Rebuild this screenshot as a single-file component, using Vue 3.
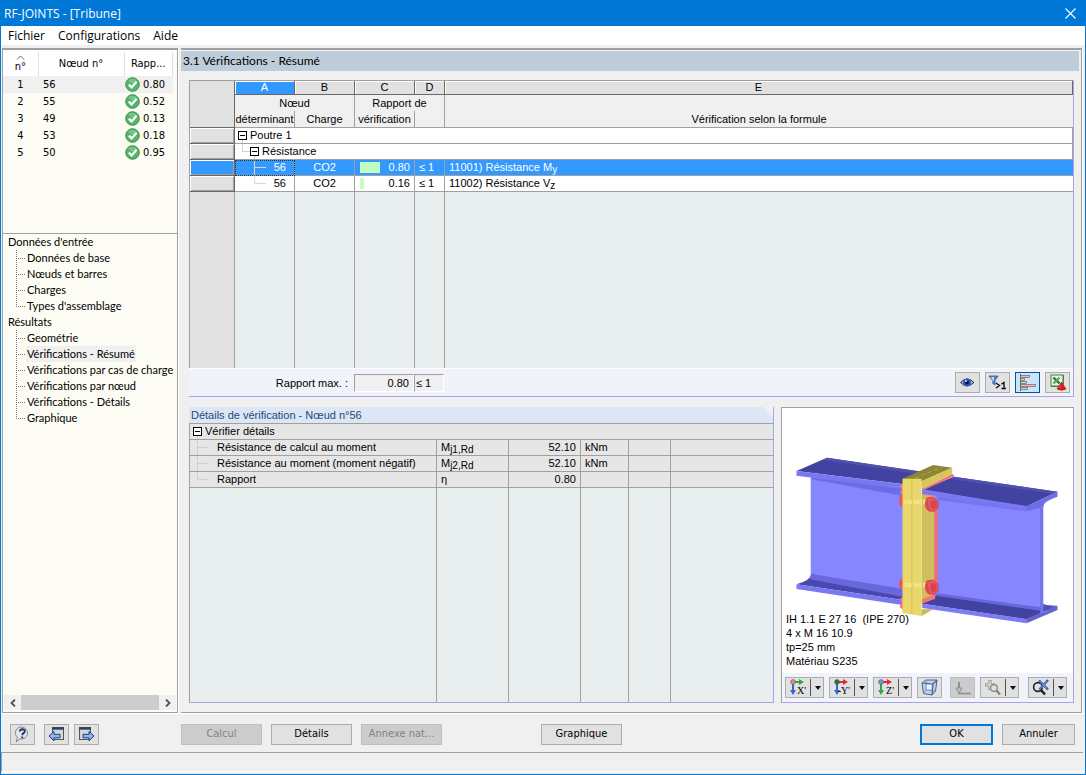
<template>
  <div class="window">
    <header class="titlebar">
      <span>RF-JOINTS - [Tribune]</span>
      <button class="close" aria-label="Fermer">
        <svg width="11" height="11" viewBox="0 0 11 11"><path d="M.5 .5L10.5 10.5M10.5 .5L.5 10.5" stroke="#fff" stroke-width="1.1" /></svg>
      </button>
    </header>
    <nav class="menubar">
      <a v-for="entry in menu" :key="entry" href="#">{{ entry }}</a>
    </nav>

    <div class="body">
      <aside class="sidebar">
        <div class="list-pane">
          <table class="node-list">
            <colgroup><col class="l-num" /><col class="l-node" /><col class="l-ratio" /></colgroup>
            <thead>
              <tr>
                <th class="sorted">
                  <svg width="9" height="5" viewBox="0 0 9 5"><path d="M1 4.5L4.5 1L8 4.5" fill="none" stroke="#666" /></svg>
                  <span>n°</span>
                </th>
                <th>Nœud n°</th>
                <th>Rapp...</th>
              </tr>
            </thead>
            <tbody>
              <tr v-for="(node, i) in nodes" :key="node.id" :class="{ active: i === 0 }">
                <td class="center">{{ i + 1 }}</td>
                <td>{{ node.id }}</td>
                <td class="ratio">
                  <svg width="15" height="15" viewBox="0 0 15 15">
                    <circle cx="7.5" cy="7.5" r="6.8" fill="#55b56a" stroke="#3c8f52" />
                    <path d="M3.2 3.6Q7.5 0 11.8 3.6L7.5 7Z" fill="#8bd39a" opacity=".6" />
                    <path d="M3.8 7.6L6.6 10.4L11.6 4.8" fill="none" stroke="#fff" stroke-width="2.2" />
                  </svg>
                  {{ node.ratio }}
                </td>
              </tr>
            </tbody>
          </table>
        </div>

        <div class="tree">
          <template v-for="group in tree" :key="group.label">
            <a class="group" href="#">{{ group.label }}</a>
            <ul>
              <li v-for="(item, i) in group.items" :key="item">
                <svg width="10" height="16" viewBox="0 0 10 16">
                  <path :d="i === group.items.length - 1 ? 'M.5 0V9' : 'M.5 0V16'" stroke="#777" stroke-dasharray="1 1" />
                  <path d="M2 8.5H10" stroke="#777" stroke-dasharray="1 1" />
                </svg>
                <a href="#" :class="{ current: item === currentPage }">{{ item }}</a>
              </li>
            </ul>
          </template>
        </div>

        <div class="scrollbar">
          <button aria-label="Gauche"><svg width="6" height="8" viewBox="0 0 6 8"><path d="M5 .5L1.5 4L5 7.5" fill="none" stroke="#505050" stroke-width="1.8" /></svg></button>
          <div class="thumb"></div>
          <button aria-label="Droite"><svg width="6" height="8" viewBox="0 0 6 8"><path d="M1 .5L4.5 4L1 7.5" fill="none" stroke="#505050" stroke-width="1.8" /></svg></button>
        </div>
      </aside>

      <main class="content">
        <h1>3.1 Vérifications - Résumé</h1>
        <div class="panels">
          <section class="summary">
            <div class="table-wrap">
              <table class="grid">
                <colgroup>
                  <col class="c-head" /><col class="c-60" /><col class="c-60" /><col class="c-60" /><col class="c-30" /><col />
                </colgroup>
                <thead>
                  <tr class="letters">
                    <th rowspan="3" class="corner"></th>
                    <th v-for="letter in 'ABCDE'" :key="letter" :class="{ chosen: letter === 'A' }">{{ letter }}</th>
                  </tr>
                  <tr>
                    <th colspan="2" class="no-bottom">Nœud</th>
                    <th colspan="2" class="no-bottom">Rapport de</th>
                    <th class="no-bottom no-right"></th>
                  </tr>
                  <tr class="labels">
                    <th>déterminant</th>
                    <th>Charge</th>
                    <th>vérification</th>
                    <th></th>
                    <th class="no-right">Vérification selon la formule</th>
                  </tr>
                </thead>
                <tbody>
                  <tr>
                    <th class="rowhead"></th>
                    <td colspan="5" class="branch-cell">
                      <span class="branch">
                        <svg width="15" height="15" viewBox="0 0 15 15">
                          <path d="M7.5 12V15" stroke="#d0d0d0" />
                          <rect x="3.5" y="3.5" width="8" height="8" fill="#fff" stroke="#000" /><path d="M5 7.5H10" stroke="#000" />
                        </svg>Poutre 1
                      </span>
                    </td>
                  </tr>
                  <tr>
                    <th class="rowhead"></th>
                    <td colspan="5" class="branch-cell">
                      <span class="branch">
                        <svg width="27" height="15" viewBox="0 0 27 15">
                          <path d="M7.5 0V7.5H15M19.5 12V15" fill="none" stroke="#d0d0d0" />
                          <rect x="15.5" y="3.5" width="8" height="8" fill="#fff" stroke="#000" /><path d="M17 7.5H22" stroke="#000" />
                        </svg>Résistance
                      </span>
                    </td>
                  </tr>
                  <tr v-for="(check, i) in checks" :key="check.code" :class="{ selected: i === 0 }">
                    <th class="rowhead"></th>
                    <td class="node-cell">
                      <span class="branch spread">
                        <svg width="32" height="15" viewBox="0 0 32 15">
                          <path :d="i === checks.length - 1 ? 'M19.5 0V7.5H31' : 'M19.5 0V15M19.5 7.5H31'" fill="none" stroke="#d8d8d8" />
                        </svg>{{ check.node }}
                      </span>
                    </td>
                    <td class="center">{{ check.load }}</td>
                    <td class="ratio-cell">
                      <span class="meter">
                        <i :style="{ width: check.ratio * 25 + 'px' }"></i>{{ check.ratio.toFixed(2) }}
                      </span>
                    </td>
                    <td>≤ 1</td>
                    <td class="no-right">{{ check.code }}) Résistance {{ check.symbol }}<sub>{{ check.axis }}</sub></td>
                  </tr>
                  <tr class="filler">
                    <th></th><td></td><td></td><td></td><td></td><td class="no-right"></td>
                  </tr>
                </tbody>
              </table>
            </div>
            <div class="summary-foot">
              <label for="ratio-max">Rapport max. :</label>
              <input id="ratio-max" class="value" value="0.80" readonly />
              <input class="limit" value="≤ 1" aria-label="Limite" readonly />
              <span class="spacer"></span>
              <button class="icon-button" aria-label="Vue">
                <svg width="17" height="15" viewBox="0 0 17 15">
                  <path d="M1.5 7.5Q8 .5 15 7.5Q8 14 1.5 7.5Z" fill="#b9c3dd" stroke="#222a3d" />
                  <circle cx="8" cy="7.5" r="4" fill="#3658b8" /><circle cx="8" cy="7.5" r="2" fill="#0a1640" /><circle cx="7" cy="6" r="1.1" fill="#c7dcff" />
                </svg>
              </button>
              <button class="icon-button" aria-label="Filtre">
                <svg width="19" height="17" viewBox="0 0 19 17">
                  <path d="M1 2H10L7 6.5V11L4.8 9.5V6.5Z" fill="#5c87c7" stroke="#31568f" stroke-width=".8" /><path d="M3 3H6L5.5 8Z" fill="#c6daf5" />
                  <path d="M8 9L11.5 11.5L8 14M16 15V8.5L13.5 10.2M13.5 14.5H18" fill="none" stroke="#111" stroke-width="1.4" />
                </svg>
              </button>
              <button class="icon-button pressed" aria-label="Barres">
                <svg width="18" height="17" viewBox="0 0 18 17">
                  <path d="M1.5 0V17" stroke="#555" />
                  <rect x="1.5" y="1.5" width="9" height="2" fill="#ffb4b4" stroke="#667" stroke-width=".7" />
                  <rect x="1.5" y="4.5" width="4" height="2" fill="#b4e8b4" stroke="#667" stroke-width=".7" />
                  <rect x="1.5" y="7.5" width="6" height="2" fill="#b4e8b4" stroke="#667" stroke-width=".7" />
                  <rect x="1.5" y="10.5" width="15" height="2" fill="#ffb4b4" stroke="#667" stroke-width=".7" />
                  <rect x="1.5" y="13.5" width="7" height="2" fill="#b4e8b4" stroke="#667" stroke-width=".7" />
                </svg>
              </button>
              <button class="icon-button" aria-label="Excel">
                <svg width="18" height="17" viewBox="0 0 18 17">
                  <rect x="2" y="1" width="12" height="11" fill="#e9f3e6" stroke="#3e8443" /><path d="M14.5 1V10M2 12.5H9" stroke="#3e8443" />
                  <path d="M4.5 3.5L10.5 9.5" stroke="#23772e" stroke-width="2.4" /><path d="M10.5 3.5L4.5 9.5" stroke="#4fa554" stroke-width="2" />
                  <path d="M12.5 8L17 15Q12.5 17.5 8 15Z" fill="#d42020" stroke="#9b1010" stroke-width=".6" /><path d="M12 9.5L9.5 14L12 15Z" fill="#f36" opacity=".6" />
                </svg>
              </button>
            </div>
          </section>

          <section class="details">
            <h2>Détails de vérification - Nœud n°56</h2>
            <div class="table-wrap">
              <table class="grid detail-grid">
                <colgroup>
                  <col /><col class="c-72" /><col class="c-72" /><col class="c-48" /><col class="c-42" /><col class="c-102" />
                </colgroup>
                <tbody>
                  <tr>
                    <td colspan="6" class="branch-cell no-right">
                      <span class="branch">
                        <svg width="15" height="15" viewBox="0 0 15 15">
                          <path d="M7.5 12V15" stroke="#d0d0d0" />
                          <rect x="3.5" y="3.5" width="8" height="8" fill="#fff" stroke="#000" /><path d="M5 7.5H10" stroke="#000" />
                        </svg>Vérifier détails
                      </span>
                    </td>
                  </tr>
                  <tr v-for="(row, i) in details" :key="row.label">
                    <td class="branch-cell">
                      <span class="branch">
                        <svg width="27" height="15" viewBox="0 0 27 15">
                          <path :d="i === details.length - 1 ? 'M7.5 0V7.5H19' : 'M7.5 0V15M7.5 7.5H19'" fill="none" stroke="#d0d0d0" />
                        </svg>{{ row.label }}
                      </span>
                    </td>
                    <td>{{ row.symbol }}<sub>{{ row.index }}</sub></td>
                    <td class="right">{{ row.value }}</td>
                    <td>{{ row.unit }}</td>
                    <td></td>
                    <td class="no-right"></td>
                  </tr>
                  <tr class="filler">
                    <td></td><td></td><td></td><td></td><td></td><td class="no-right"></td>
                  </tr>
                </tbody>
              </table>
            </div>
          </section>

          <section class="viewer">
            <div class="scene">
              <svg viewBox="6 24 870 795" height="265">
                <!-- left beam -->
                <path d="M92 232L370 262V600L92 536Z" fill="#8686ff" />
                <path d="M92 232L370 262V288L92 238Z" fill="#6c6ce6" />
                <path d="M48 213L139 173L430 216L366 252Z" fill="#4242a0" />
                <path d="M48 213L366 252V267L48 227Z" fill="#7878f0" />
                <path d="M139 173L430 216L415 222L130 180Z" fill="#5050b0" />
                <path d="M92 522Q92 540 48 553L366 600V578Z" fill="#4848ae" />
                <path d="M92 522L366 566V590L88 538Z" fill="#6868dc" />
                <path d="M48 553L366 600V615L48 567Z" fill="#7878f0" />
                <path d="M92 232V524" stroke="#7070e8" stroke-width="2" />
                <!-- welds on the left side -->
                <path d="M357 257L368 250V286L357 278L364 268ZM357 598L368 590V630L357 620L364 608Z" fill="#f57474" />
                <path d="M368 286H360Q350 304 360 319H368ZM368 536H360Q350 552 360 568H368Z" fill="#e05a64" />
                <!-- right beam -->
                <path d="M425 262L788 316V630L425 590Z" fill="#8686ff" />
                <path d="M472 290L740 326L788 314V322L740 334L472 300Z" fill="#7474ee" />
                <path d="M425 268L520 230L831 275L738 319Z" fill="#4242a0" />
                <path d="M520 230L831 275L816 281L510 237Z" fill="#5050b0" />
                <path d="M425 270L738 318V330L425 283Z" fill="#7878f0" />
                <path d="M738 318L831 275V290Q788 304 788 320L738 330Z" fill="#6e6ee4" />
                <path d="M472 580L782 622V638L425 608Z" fill="#6868dc" />
                <path d="M425 598L470 588L780 632L831 618L738 658L425 611Z" fill="#4242a0" />
                <path d="M425 611L738 657V670L425 624Z" fill="#7c7cf4" />
                <path d="M738 657L831 617V630L738 670Z" fill="#6262d0" />
                <path d="M779 318H788V618Q790 630 808 635L776 641Q784 632 779 618Z" fill="#7474ec" />
                <path d="M788 610Q788 617 831 617L788 634Z" fill="#5050b8" />
                <!-- end plates -->
                <path d="M366 236L458 195L515 203L423 244Z" fill="#8f8534" />
                <path d="M405 234L485 200" stroke="#afa44a" stroke-width="3" stroke-dasharray="12 8" />
                <path d="M423 244L515 203V222L423 266Z" fill="#d6c75c" />
                <path d="M425 266L515 222L523 228L430 270Z" fill="#f57474" />
                <path d="M423 286L462 290V590L423 610Z" fill="#cfc05c" />
                <path d="M366 236H423V648L366 639Z" fill="#e9d76b" />
                <path d="M394 240V643" stroke="#c3b44d" stroke-width="2" />
                <path d="M423 628L458 628L423 648Z" fill="#c8b74f" />
                <path d="M462 320H472V545L462 560Z" fill="#f56c72" />
                <path d="M425 598L464 582V596L425 611Z" fill="#f57474" />
                <path d="M423 282L466 288L456 294L430 292Z" fill="#f0a060" />
                <!-- bolts -->
                <g v-for="y in [306, 555]" :key="y">
                  <path :d="`M370 ${y}H434`" stroke="#f1e27e" stroke-width="14" stroke-dasharray="24 5" />
                  <ellipse cx="450" :cy="y + 7" rx="17" ry="22" fill="#e54c58" />
                  <path :d="`M438 ${y - 12}L458 ${y - 15}L473 ${y - 2}V${y + 17}L460 ${y + 29}L444 ${y + 24}Z`" fill="#e85560" stroke="#bd4048" stroke-width="2" />
                  <ellipse cx="459" :cy="y + 8" rx="9" ry="13" fill="#d64552" />
                </g>
              </svg>
              <p class="caption">IH 1.1 E 27 16 &nbsp;(IPE 270)<br />4 x M 16 10.9<br />tp=25 mm<br />Matériau S235</p>
            </div>
            <div class="view-tools">
              <button v-for="axis in axes" :key="axis.label" class="split" :aria-label="'Vue ' + axis.label">
                <svg width="18" height="17" viewBox="0 0 18 17">
                  <path d="M4 3H11" :stroke="axis.across" stroke-width="2" /><path d="M10 0L15 3L10 6Z" :fill="axis.across" />
                  <path d="M4 4V12" :stroke="axis.down" stroke-width="2" /><path d="M1 11H7L4 16Z" :fill="axis.down" />
                  <circle cx="4" cy="3" r="2.4" :fill="axis.origin" stroke="#444" stroke-width=".5" />
                  <text x="17" y="15" text-anchor="end" font-family="Liberation Serif, serif" font-size="10">{{ axis.label }}</text>
                </svg>
                <span class="divider"></span><span class="arrow"></span>
              </button>
              <button class="icon-button" aria-label="Isométrie">
                <svg width="17" height="17" viewBox="0 0 17 17" stroke="#4a5f8c">
                  <path d="M1 4L5 1H16L14.5 12L11 16L2.5 14.5Z" fill="#c3d3ee" /><path d="M5 1V11L14.5 12M2.5 14.5L5 11" fill="none" stroke="#8195bd" />
                  <path d="M1 4L12 5L11 16M12 5L16 1" fill="none" stroke-width="1.2" /><rect x="6" y="6" width="4" height="4" fill="#f1f5ff" stroke="none" />
                </svg>
              </button>
              <button class="icon-button disabled after-cube" aria-label="Charges" disabled>
                <svg width="17" height="17" viewBox="0 0 17 17">
                  <path d="M5 3V9" stroke="#8f8f8f" stroke-width="2" /><path d="M2 9H8L5 14Z" fill="#c4c4c4" stroke="#8f8f8f" /><path d="M4 14.5H17" stroke="#8f8f8f" stroke-width="1.6" />
                </svg>
              </button>
              <button class="split" aria-label="Zoom">
                <svg width="18" height="17" viewBox="0 0 18 17">
                  <path d="M6 1V11M1 6H11" stroke="#a2a49c" stroke-width="3.4" /><path d="M6 2V10M2 6H10" stroke="#ecece8" stroke-width="1" />
                  <circle cx="10" cy="9" r="3.4" fill="#dfe0da" stroke="#85877f" stroke-width="1.2" /><path d="M12.5 11.5L16 15.5" stroke="#85877f" stroke-width="2.2" />
                </svg>
                <span class="divider"></span><span class="arrow"></span>
              </button>
              <button class="split last" aria-label="Zoom étendu">
                <svg width="18" height="17" viewBox="0 0 18 17">
                  <circle cx="6" cy="8" r="4.4" fill="#d7e2f3" stroke="#222" stroke-width="1.6" /><path d="M9 11L13 15.5" stroke="#222" stroke-width="2.6" />
                  <path d="M7 1.5L16 10.5M16 1L7.5 10.5" stroke="#35589f" stroke-width="2.4" /><path d="M8 2.5L15 9.5M15 2L8.5 9.5" stroke="#93b6ef" stroke-width=".8" />
                </svg>
                <span class="divider"></span><span class="arrow"></span>
              </button>
            </div>
          </section>
        </div>
      </main>
    </div>

    <footer class="actions">
      <div class="left-actions">
        <button class="icon-button help" aria-label="Aide">
          <svg width="17" height="17" viewBox="0 0 17 17">
            <path d="M8 1A6.5 6 0 1 1 6 13L2 16L3.5 11.5A6.5 6 0 0 1 8 1Z" fill="#e2e5ea" stroke="#858990" />
            <path d="M5.8 5.5Q6 3.2 8.4 3.2Q11 3.3 10.8 5.4Q10.7 6.6 9.2 7.4Q8.3 8 8.3 9.2M8.2 10.6V12.3" fill="none" stroke="#25326f" stroke-width="1.9" />
          </svg>
        </button>
        <button class="icon-button" aria-label="Précédent">
          <svg width="17" height="17" viewBox="0 0 17 17">
            <rect x="4.5" y="1.5" width="11" height="12" fill="#d6d6d6" stroke="#555" /><path d="M4 2.5H16" stroke="#2e3f68" stroke-width="2.4" />
            <path d="M1 10L6 5.5V8.3H12V11.8H6V14.8Z" fill="#8db5f2" stroke="#1f3f82" />
          </svg>
        </button>
        <button class="icon-button" aria-label="Suivant">
          <svg width="17" height="17" viewBox="0 0 17 17">
            <rect x="1.5" y="1.5" width="11" height="12" fill="#d6d6d6" stroke="#555" /><path d="M1 2.5H13" stroke="#2e3f68" stroke-width="2.4" />
            <path d="M16 10L11 5.5V8.3H5V11.8H11V14.8Z" fill="#8db5f2" stroke="#1f3f82" />
          </svg>
        </button>
      </div>
      <button class="push" disabled>Calcul</button>
      <button class="push">Détails</button>
      <button class="push" disabled>Annexe nat...</button>
      <button class="push graphic">Graphique</button>
      <span class="spacer"></span>
      <button class="push small default">OK</button>
      <button class="push small">Annuler</button>
    </footer>
    <div class="statusbar"></div>
  </div>
</template>

<script setup>
import { ref } from 'vue';

const menu = ['Fichier', 'Configurations', 'Aide'];
const currentPage = ref('Vérifications - Résumé');

const nodes = [
  { id: 56, ratio: '0.80' },
  { id: 55, ratio: '0.52' },
  { id: 49, ratio: '0.13' },
  { id: 53, ratio: '0.18' },
  { id: 50, ratio: '0.95' },
];

const tree = [
  {
    label: "Données d'entrée",
    items: ['Données de base', 'Nœuds et barres', 'Charges', "Types d'assemblage"],
  },
  {
    label: 'Résultats',
    items: [
      'Geométrie',
      'Vérifications - Résumé',
      'Vérifications par cas de charge',
      'Vérifications par nœud',
      'Vérifications - Détails',
      'Graphique',
    ],
  },
];

const checks = [
  { node: 56, load: 'CO2', ratio: 0.8, code: 11001, symbol: 'M', axis: 'y' },
  { node: 56, load: 'CO2', ratio: 0.16, code: 11002, symbol: 'V', axis: 'z' },
];

const details = [
  { label: 'Résistance de calcul au moment', symbol: 'M', index: 'j1,Rd', value: '52.10', unit: 'kNm' },
  { label: 'Résistance au moment (moment négatif)', symbol: 'M', index: 'j2,Rd', value: '52.10', unit: 'kNm' },
  { label: 'Rapport', symbol: 'η', index: '', value: '0.80', unit: '' },
];

const axes = [
  { label: "X'", across: '#2fa84a', down: '#3565d6', origin: '#e88' },
  { label: "-Y'", across: '#e02b3c', down: '#3565d6', origin: '#1f7a33' },
  { label: "Z'", across: '#e02b3c', down: '#2fa84a', origin: '#88e' },
];
</script>

<style>
body {
  margin: 0;
  background: #f0f0f0;
}
</style>

<style scoped>
* {
  box-sizing: border-box;
}

.window {
  display: flex;
  flex-direction: column;
  min-height: 100vh;
  border: 1px solid #0078d7;
  background: #f0f0f0;
  color: #000;
  font: 11px/16px "DejaVu Sans Condensed", "DejaVu Sans", sans-serif;
}

button,
input {
  font: inherit;
  color: inherit;
}

a {
  color: inherit;
  text-decoration: none;
}

svg {
  display: block;
  flex: none;
}

.titlebar {
  display: flex;
  align-items: center;
  justify-content: space-between;
  height: 25px;
  padding: 0 9px 0 3px;
  background: #0078d7;
  color: #fff;
  font: 12px/24px "Open Sans", sans-serif;
}

.close {
  padding: 0;
  border: 0;
  background: none;
}

.menubar {
  display: flex;
  gap: 13px;
  height: 19px;
  padding-left: 7px;
  background: #fff;
  font: 12px/19px "Open Sans", sans-serif;
}

.body {
  display: flex;
  flex: 1;
  gap: 3px;
  margin: 3px 3px 0 1px;
}

.sidebar {
  display: flex;
  flex-direction: column;
  width: 176px;
  border: 1px solid #a0a0a0;
  border-width: 2px 1px 1px 1px;
  background: #fcfcf4;
  box-shadow: 1px 1px #fff;
}

.list-pane {
  height: 184px;
  border-top: 2px solid #fff;
  border-bottom: 1px solid #a0a0a0;
}

.node-list {
  width: 170px;
  table-layout: fixed;
  border-collapse: collapse;
}

.l-num { width: 35px; }
.l-node { width: 86px; }

.node-list th {
  height: 24px;
  padding: 0;
  border-right: 1px solid #e0e0e0;
  background: #fff;
  font-weight: normal;
}

.sorted svg {
  margin: 0 auto;
}

.sorted span {
  display: block;
  line-height: 14px;
}

.node-list td {
  height: 17px;
  padding: 0 5px;
  line-height: 17px;
}

.node-list .active {
  background: #f0f0f0;
}

.node-list .ratio {
  display: flex;
  align-items: center;
  gap: 3px;
  padding: 0 1px;
}

.center { text-align: center; }
.right { text-align: right; }

.tree {
  flex: 1;
  font-family: Lato, sans-serif;
  white-space: nowrap;
}

.tree .group {
  display: block;
  padding-left: 5px;
}

.tree ul {
  margin: 0;
  padding: 0 0 0 13px;
  list-style: none;
}

.tree li {
  display: flex;
}

.tree li a {
  padding: 0 1px;
}

.tree .current {
  background: #f0f0f0;
}

.scrollbar {
  display: flex;
  height: 15px;
  margin: 0 1px 2px;
  background: #f0f0f0;
}

.scrollbar button {
  display: grid;
  place-items: center;
  width: 17px;
  padding: 0;
  border: 0;
  background: none;
}

.thumb {
  flex: 1;
  background: #cdcdcd;
}

.content {
  display: flex;
  flex: 1;
  flex-direction: column;
  min-width: 0;
  border: 1px solid #a0a0a0;
  border-width: 2px 1px 1px 0;
  box-shadow: 1px 1px #fff;
}

h1 {
  height: 20px;
  margin: 1px 2px 0 0;
  padding-left: 2px;
  background: #bfcddb;
  font: 12px/20px Lato, sans-serif;
}

.panels {
  display: grid;
  flex: 1;
  grid-template-columns: minmax(0, 1fr) 293px;
  grid-template-rows: 1fr auto;
  gap: 10px 7px;
  padding: 9px 7px 9px 8px;
  font-family: "Liberation Sans", Arial, sans-serif;
}

.summary {
  display: flex;
  flex-direction: column;
  grid-column: 1 / -1;
  border-right: 1px solid #a6a6e6;
  border-bottom: 1px solid #a6a6e6;
}

.table-wrap {
  display: grid;
  flex: 1;
  border: 1px solid #a0a0a0;
  border-width: 1px 0 0 1px;
}

.grid {
  width: 100%;
  height: 100%;
  table-layout: fixed;
  border-collapse: separate;
  border-spacing: 0;
}

.c-head { width: 45px; }
.c-30 { width: 30px; }
.c-60 { width: 60px; }
.c-42 { width: 42px; }
.c-48 { width: 48px; }
.c-72 { width: 72px; }
.c-102 { width: 102px; }

.grid th,
.grid td {
  height: 16px;
  padding: 0 4px;
  border: 0 solid #a0a0a0;
  border-width: 0 1px 1px 0;
  background: #fff;
  font-weight: normal;
  line-height: 15px;
  white-space: nowrap;
}

.grid thead th {
  padding: 0;
  background: #f0f0f0;
}

.grid .letters th {
  height: 14px;
  border-color: #696969;
  background: #e1e1e1;
  box-shadow: inset 1px 1px #fff;
  line-height: 13px;
}

.grid .letters .chosen {
  background: #3399ff;
  color: #fff;
}

.grid .letters .corner {
  background: #e1e1e1;
  box-shadow: none;
}

.grid .labels th {
  height: 17px;
}

.grid .rowhead {
  border-color: #696969;
  background: #e1e1e1;
  box-shadow: inset 1px 1px #fff, inset -1px -1px #a0a0a0;
}

.grid .no-bottom { border-bottom-width: 0; }
.grid .no-right { border-right-width: 0; }

.grid .branch-cell,
.grid .node-cell {
  padding: 0;
}

.branch {
  display: flex;
}

.spread {
  justify-content: space-between;
  padding-right: 8px;
}

.grid .selected td,
.grid .selected .rowhead {
  background: #3399ff;
  color: #fff;
}

.selected .node-cell {
  outline: 1px dotted #333;
  outline-offset: -1px;
}

.meter {
  display: flex;
  justify-content: space-between;
  padding-left: 1px;
}

.meter i {
  height: 11px;
  margin-top: 2px;
  background: #c0ffc0;
}

sub {
  font-size: 10px;
  line-height: 0;
  vertical-align: -2px;
}

.grid .filler td {
  height: auto;
  border-bottom: 0;
  background: #e8eeee;
}

.grid .filler th {
  height: auto;
  border-bottom: 0;
  background: #e1e1e1;
}

.summary-foot {
  display: flex;
  align-items: center;
  height: 28px;
  padding-right: 3px;
  border-top: 1px solid #fff;
  background: #f0f4fa;
}

.summary-foot label {
  width: 159px;
  margin-right: 6px;
  text-align: right;
}

.summary-foot input {
  width: 60px;
  height: 18px;
  padding: 0 4px;
  border: 1px solid #fff;
  border-top-color: #a0a0a0;
  border-left-color: #a0a0a0;
  background: #f0f0f0;
  text-align: right;
}

.summary-foot .limit {
  width: 30px;
  padding: 0 1px;
  text-align: left;
}

.spacer {
  flex: 1;
}

.icon-button {
  display: grid;
  place-items: center;
  width: 25px;
  height: 21px;
  padding: 0;
  border: 1px solid #adadad;
  background: #e1e1e1;
}

.summary-foot .icon-button {
  margin-left: 5px;
}

.icon-button.pressed {
  border-color: #005499;
  background: #cce4f7;
}

.details {
  display: flex;
  flex-direction: column;
  border-right: 1px solid #a6a6e6;
  border-bottom: 1px solid #a6a6e6;
}

h2 {
  height: 16px;
  margin: 0;
  padding-left: 2px;
  background: #dce6f4;
  clip-path: polygon(0 0, calc(100% - 10px) 0, 100% 10px, 100% 100%, 0 100%);
  color: #1c4a78;
  font: 11px/16px "Liberation Sans", Arial, sans-serif;
}

.detail-grid td {
  background: #e6e6e6;
}

.viewer {
  border: 1px solid #a0a0a0;
  border-right-color: #a6a6e6;
  border-bottom-color: #a6a6e6;
  background: #f0f4fa;
}

.scene {
  position: relative;
  background: #fff;
}

.scene svg {
  width: 100%;
}

.caption {
  position: absolute;
  bottom: 5px;
  left: 4px;
  margin: 0;
  line-height: 14px;
}

.view-tools {
  display: flex;
  align-items: center;
  gap: 5px;
  height: 29px;
  padding-left: 3px;
}

.split {
  display: flex;
  align-items: center;
  width: 39px;
  height: 21px;
  padding: 0 0 0 3px;
  border: 1px solid #adadad;
  background: #e1e1e1;
}

.divider {
  width: 1px;
  height: 17px;
  margin: 0 4px 0 3px;
  background: #555;
}

.arrow {
  border: 3px solid transparent;
  border-top: 4px solid #111;
  border-bottom: 0;
}

.after-cube {
  margin-left: 3px;
}

.last {
  margin-left: 4px;
}

.disabled {
  background: #cccccc;
  border-color: #bfbfbf;
}

.actions {
  display: flex;
  align-items: center;
  gap: 9px;
  height: 39px;
  padding: 2px 10px 0 9px;
  border-top: 1px solid #fff;
}

.left-actions {
  display: flex;
  gap: 5px;
  width: 162px;
}

.help {
  margin-right: 4px;
}

.push {
  width: 81px;
  height: 21px;
  padding: 0;
  border: 1px solid #adadad;
  background: #e1e1e1;
  white-space: nowrap;
}

.push:disabled {
  border-color: #bfbfbf;
  background: #ccc;
  color: #838383;
}

.graphic {
  margin-left: 90px;
}

.small {
  width: 73px;
}

.default {
  border: 2px solid #0078d7;
}

.statusbar {
  height: 20px;
  margin: 0 2px 2px 0;
  border: 1px solid #a0a0a0;
  border-right: 0;
  border-bottom-color: #fff;
}
</style>
